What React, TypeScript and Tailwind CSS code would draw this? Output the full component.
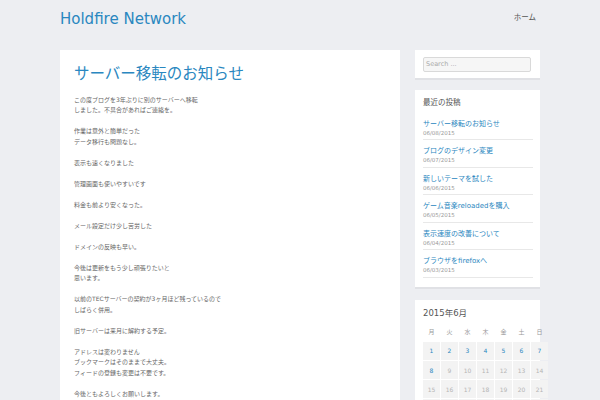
import React from "react";

const posts = [
  { t: "サーバー移転のお知らせ", d: "06/08/2015" },
  { t: "ブログのデザイン変更", d: "06/07/2015" },
  { t: "新しいテーマを試した", d: "06/06/2015" },
  { t: "ゲーム音楽reloadedを購入", d: "06/05/2015" },
  { t: "表示速度の改善について", d: "06/04/2015" },
  { t: "ブラウザをfirefoxへ", d: "06/03/2015" },
];

const paragraphs: string[][] = [
  ["この度ブログを3年ぶりに別のサーバーへ移転", "しました。不具合があればご連絡を。"],
  ["作業は意外と簡単だった", "データ移行も問題なし。"],
  ["表示も速くなりました"],
  ["管理画面も使いやすいです"],
  ["料金も前より安くなった。"],
  ["メール設定だけ少し苦労した"],
  ["ドメインの反映も早い。"],
  ["今後は更新をもう少し頑張りたいと", "思います。"],
  ["以前のTECサーバーの契約が3ヶ月ほど残っているので", "しばらく併用。"],
  ["旧サーバーは来月に解約する予定。"],
  ["アドレスは変わりません", "ブックマークはそのままで大丈夫。", "フィードの登録も変更は不要です。"],
  ["今後ともよろしくお願いします。"],
];

const weekdays = ["月", "火", "水", "木", "金", "土", "日"];

export default function App() {
  const days: (number | null)[] = [];
  for (let i = 1; i <= 30; i++) days.push(i);
  while (days.length % 7 !== 0) days.push(null);

  return (
    <div className="min-h-[400px] bg-[#edeef2] font-['DejaVu_Sans','Noto_Sans_CJK_JP',sans-serif]">
      <div className="mx-auto w-[480px]">
        <header className="flex h-[50px] items-start justify-between">
          <div className="pt-[12px] text-[15px] leading-[15px] text-[#2a87c0]">Holdfire Network</div>
          <nav className="pr-[4px] pt-[13px] text-[7.5px] leading-[9px] text-[#555]">ホーム</nav>
        </header>
        <div className="flex items-start gap-[15px]">
          <main className="min-h-[400px] w-[340px] bg-white px-[14px] pt-[14px]">
            <h1 className="mb-[10.75px] text-[15.5px] leading-[20px] text-[#2a87c0]">サーバー移転のお知らせ</h1>
            <div className="text-[6px] leading-[10.5px] text-[#666]">
              {paragraphs.map((p, i) => (
                <p key={i} className="mb-[10.5px] whitespace-nowrap">
                  {p.map((l, j) => (
                    <React.Fragment key={j}>
                      {l}
                      {j < p.length - 1 && <br />}
                    </React.Fragment>
                  ))}
                </p>
              ))}
            </div>
          </main>
          <aside className="flex w-[125px] flex-col">
            <div className="mb-[12px] bg-white pb-[6px] pl-[8px] pt-[7px] shadow-[0_2px_0_#e0e1e5]">
              <div className="flex h-[15px] w-[108px] items-center rounded-[2px] border border-[#d9d9d9] bg-[#f6f6f6] px-[2px] text-[6.5px] text-[#aaa]">
                Search ...
              </div>
            </div>
            <div className="mb-[13px] bg-white pb-[9px] pl-[8px] pr-[7px] pt-[8px] shadow-[0_2px_0_#e0e1e5]">
              <h2 className="mb-[4.5px] text-[7.5px] leading-[10px] text-[#555]">最近の投稿</h2>
              <ul>
                {posts.map((p) => (
                  <li key={p.d} className="border-b border-[#e8e8e8] pb-[1.6px] pt-[7px]">
                    <div className="whitespace-nowrap text-[7px] leading-[9px] text-[#2a87c0]">{p.t}</div>
                    <div className="text-[5.5px] leading-[9px] text-[#999]">{p.d}</div>
                  </li>
                ))}
              </ul>
            </div>
            <div className="bg-white pb-[10px] pl-[8px] pt-[8px]">
              <h2 className="mb-[3.5px] text-[8.5px] leading-[11px] text-[#555]">2015年6月</h2>
              <div className="grid w-[125px] grid-cols-[repeat(7,17px)] gap-[1px]">
                {weekdays.map((w) => (
                  <div key={w} className="flex h-[18px] items-center justify-center text-[6px] text-[#999]">
                    {w}
                  </div>
                ))}
                {days.map((d, i) => (
                  <div
                    key={i}
                    className={
                      "flex h-[18.3px] items-center justify-center bg-[#f3f3f3] text-[6px] " +
                      (d !== null && d <= 8 ? "text-[#2a87c0]" : "text-[#b5b5b5]")
                    }
                  >
                    {d ?? ""}
                  </div>
                ))}
              </div>
            </div>
          </aside>
        </div>
      </div>
    </div>
  );
}
